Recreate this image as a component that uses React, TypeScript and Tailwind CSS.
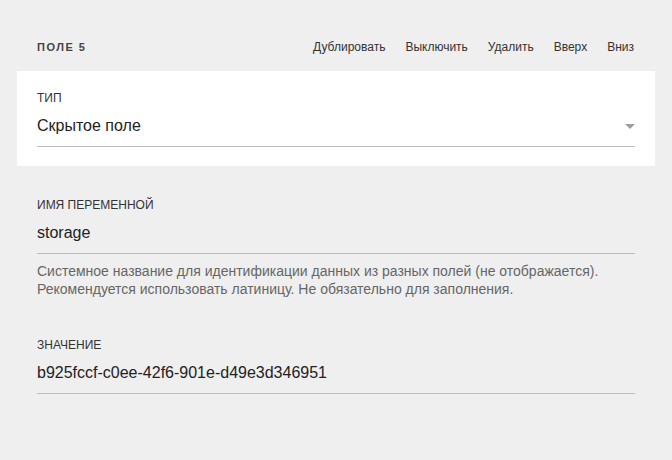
import React from 'react';

const ACTIONS = ['Дублировать', 'Выключить', 'Удалить', 'Вверх', 'Вниз'];

function Field({ label, value, arrow }: { label: string; value: string; arrow?: boolean }) {
  return (
    <div>
      <div className="text-[12px] leading-[16px] uppercase text-[#333]">{label}</div>
      <div className="h-[41px] flex items-center justify-between border-b border-[#bdbdbd] text-[16px] text-[#222]">
        <span>{value}</span>
        {arrow && (
          <svg width="10" height="5" viewBox="0 0 10 5">
            <path d="M0 0h10L5 5z" fill="#9e9e9e" />
          </svg>
        )}
      </div>
    </div>
  );
}

export default function App() {
  return (
    <div className="min-h-[460px] bg-[#efefef] pt-[35px] pb-10 font-['Liberation_Sans',Arial,sans-serif]">
      <div className="flex items-center justify-between h-6 pl-[37px] pr-[38px]">
        <span className="text-[11px] font-bold tracking-[1.5px] text-[#444]">ПОЛЕ 5</span>
        <div className="flex gap-[20px] text-[12px] text-[#333]">
          {ACTIONS.map(a => <span key={a}>{a}</span>)}
        </div>
      </div>

      <div className="mt-[12px] mx-[17px] bg-white pt-[19px] pb-[19px] px-[20px]">
        <Field label="Тип" value="Скрытое поле" arrow />
      </div>

      <div className="px-[37px] mt-[31px]">
        <Field label="Имя переменной" value="storage" />
        <p className="mt-[8px] text-[14px] leading-[18px] text-[#666]">
          Системное название для идентификации данных из разных полей (не отображается).
          <br />
          Рекомендуется использовать латиницу. Не обязательно для заполнения.
        </p>

        <div className="mt-[39px]">
          <Field label="Значение" value="b925fccf-c0ee-42f6-901e-d49e3d346951" />
        </div>
      </div>
    </div>
  );
}
